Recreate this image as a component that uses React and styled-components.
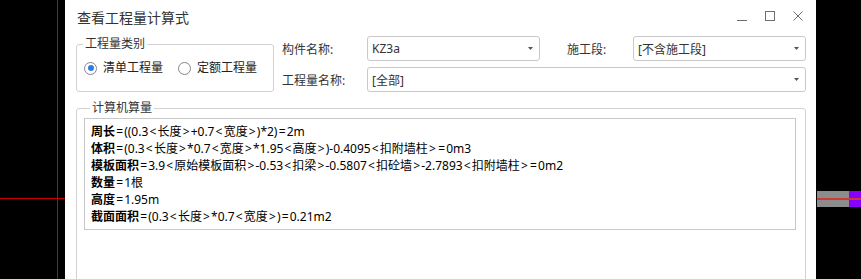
import React from 'react';
import styled, { createGlobalStyle } from 'styled-components';

const GlobalStyle = createGlobalStyle`
  html, body {
    margin: 0;
    padding: 0;
    background: #000;
  }
  body {
    font-family: "Noto Sans", "Noto Sans CJK SC", sans-serif;
  }
`;

const Screen = styled.div`
  position: relative;
  width: 861px;
  height: 279px;
  overflow: hidden;
  background: #000;
  display: flex;
  padding-left: 65px;
  box-sizing: border-box;
`;

const Backdrop = styled.svg`
  position: absolute;
  left: 0;
  top: 0;
`;

const Dialog = styled.div`
  position: relative;
  width: 751px;
  height: 100%;
  overflow: hidden;
  background: #fff;
  display: flex;
  flex-direction: column;
`;

const TitleBar = styled.div`
  height: 34px;
  flex-shrink: 0;
  display: flex;
  align-items: center;
  padding: 0 13px 0 12px;
`;

const Title = styled.div`
  flex: 1;
  font-size: 14px;
  color: #333;
`;

const WinButtons = styled.div`
  display: flex;
  gap: 18px;
  margin-top: -2px;
  color: #6e6e6e;
`;

const TopGrid = styled.div`
  display: grid;
  grid-template-columns: 206px 85px 173px 93px 173px;
  grid-template-rows: 25px 25px;
  row-gap: 6px;
  padding: 0 10px 0 11px;
  margin-top: 2px;
`;

const GroupBox = styled.fieldset`
  margin: 0;
  padding: 0;
  min-width: 0;
  border: 1px solid #d2d2d2;
  border-radius: 3px;
`;

const TypeGroup = styled(GroupBox)`
  grid-column: 1;
  grid-row: 1 / 3;
  margin-right: 8px;
`;

const CalcGroup = styled(GroupBox)`
  margin: 8px 10px 0 11px;
  height: 300px;
  flex-shrink: 0;
  padding: 2px 9px 0 7px;
`;

const Legend = styled.legend`
  font-size: 12px;
  line-height: 16px;
  color: #333;
  padding: 0 2px;
  margin-left: 6px;
`;

const RadioRow = styled.div`
  height: 32px;
  display: flex;
  align-items: center;
  gap: 15px;
  padding-left: 7px;
`;

const Radio = styled.label`
  display: flex;
  align-items: center;
  gap: 6px;
  font-size: 12px;
  line-height: 16px;
  color: #222;
`;

const RadioMark = styled.span`
  width: 13px;
  height: 13px;
  box-sizing: border-box;
  border: 1px solid #858585;
  border-radius: 50%;
  display: flex;
  align-items: center;
  justify-content: center;
  &::after {
    content: '';
    width: 6px;
    height: 6px;
    border-radius: 50%;
    background: ${p => (p.$checked ? '#2a7de6' : 'transparent')};
  }
`;

const FieldLabel = styled.div`
  display: flex;
  align-items: center;
  padding-left: ${p => p.$indent || 0}px;
  font-size: 12px;
  color: #333;
`;

const Combo = styled.div`
  grid-column: ${p => p.$span || 'auto'};
  display: flex;
  align-items: center;
  justify-content: space-between;
  padding: 0 6px 0 4px;
  border: 1px solid #c9c9c9;
  border-radius: 3px;
  font-size: 12px;
  color: #333;
`;

const TextBox = styled.div`
  height: 100%;
  border: 1px solid #c9c9c9;
  padding: 4px 6px;
  box-sizing: border-box;
`;

const Formula = styled.div`
  font-size: 12px;
  line-height: 17px;
  color: #000;
  white-space: nowrap;
`;

const Term = styled.b`
  font-weight: 700;
`;

// < > = are drawn with wide side bearings in the original font
const Op = styled.span`
  margin: 0 1.15px;
`;

const Caret = () => (
  <svg width="5" height="3" viewBox="0 0 5 3">
    <path d="M0 0h5L2.5 3z" fill="#555" />
  </svg>
);

const formulas = [
  ['周长', '=((0.3<长度>+0.7<宽度>)*2)=2m'],
  ['体积', '=(0.3<长度>*0.7<宽度>*1.95<高度>)-0.4095<扣附墙柱>=0m3'],
  ['模板面积', '=3.9<原始模板面积>-0.53<扣梁>-0.5807<扣砼墙>-2.7893<扣附墙柱>=0m2'],
  ['数量', '=1根'],
  ['高度', '=1.95m'],
  ['截面面积', '=(0.3<长度>*0.7<宽度>)=0.21m2'],
];

const renderExpr = expr =>
  expr.split(/([<>=])/).map((part, i) =>
    /^[<>=]$/.test(part) ? <Op key={i}>{part}</Op> : part
  );

export default function App() {
  return (
    <>
      <GlobalStyle />
      <Screen>
        <Backdrop width="861" height="279" viewBox="0 0 861 279">
          <line x1="57.5" y1="0" x2="57.5" y2="279" stroke="#c40000" strokeWidth="1" />
          <line x1="0" y1="198.5" x2="65" y2="198.5" stroke="#c40000" strokeWidth="1" />
          <rect x="817" y="191" width="32" height="16" fill="#8c8c8c" />
          <rect x="849" y="191" width="12" height="16" fill="#8a00ff" />
          <line x1="817" y1="199" x2="861" y2="199" stroke="#cc3a3a" strokeWidth="2" />
        </Backdrop>
        <Dialog>
          <TitleBar>
            <Title>查看工程量计算式</Title>
            <WinButtons>
              <svg width="10" height="10" viewBox="0 0 10 10">
                <path d="M0 9.5h10" stroke="currentColor" />
              </svg>
              <svg width="10" height="10" viewBox="0 0 10 10">
                <rect x="0.5" y="0.5" width="9" height="9" fill="none" stroke="currentColor" />
              </svg>
              <svg width="10" height="10" viewBox="0 0 10 10">
                <path d="M0.5 0.5l9 9M9.5 0.5l-9 9" stroke="currentColor" />
              </svg>
            </WinButtons>
          </TitleBar>

          <TopGrid>
            <TypeGroup>
              <Legend>工程量类别</Legend>
              <RadioRow>
                <Radio>
                  <RadioMark $checked />
                  清单工程量
                </Radio>
                <Radio>
                  <RadioMark />
                  定额工程量
                </Radio>
              </RadioRow>
            </TypeGroup>
            <FieldLabel>构件名称:</FieldLabel>
            <Combo>
              KZ3a
              <Caret />
            </Combo>
            <FieldLabel $indent={27}>施工段:</FieldLabel>
            <Combo>
              [不含施工段]
              <Caret />
            </Combo>
            <FieldLabel>工程量名称:</FieldLabel>
            <Combo $span="3 / 6">
              [全部]
              <Caret />
            </Combo>
          </TopGrid>

          <CalcGroup>
            <Legend>计算机算量</Legend>
            <TextBox>
              {formulas.map(([term, expr]) => (
                <Formula key={term}>
                  <Term>{term}</Term>
                  {renderExpr(expr)}
                </Formula>
              ))}
            </TextBox>
          </CalcGroup>
        </Dialog>
      </Screen>
    </>
  );
}
